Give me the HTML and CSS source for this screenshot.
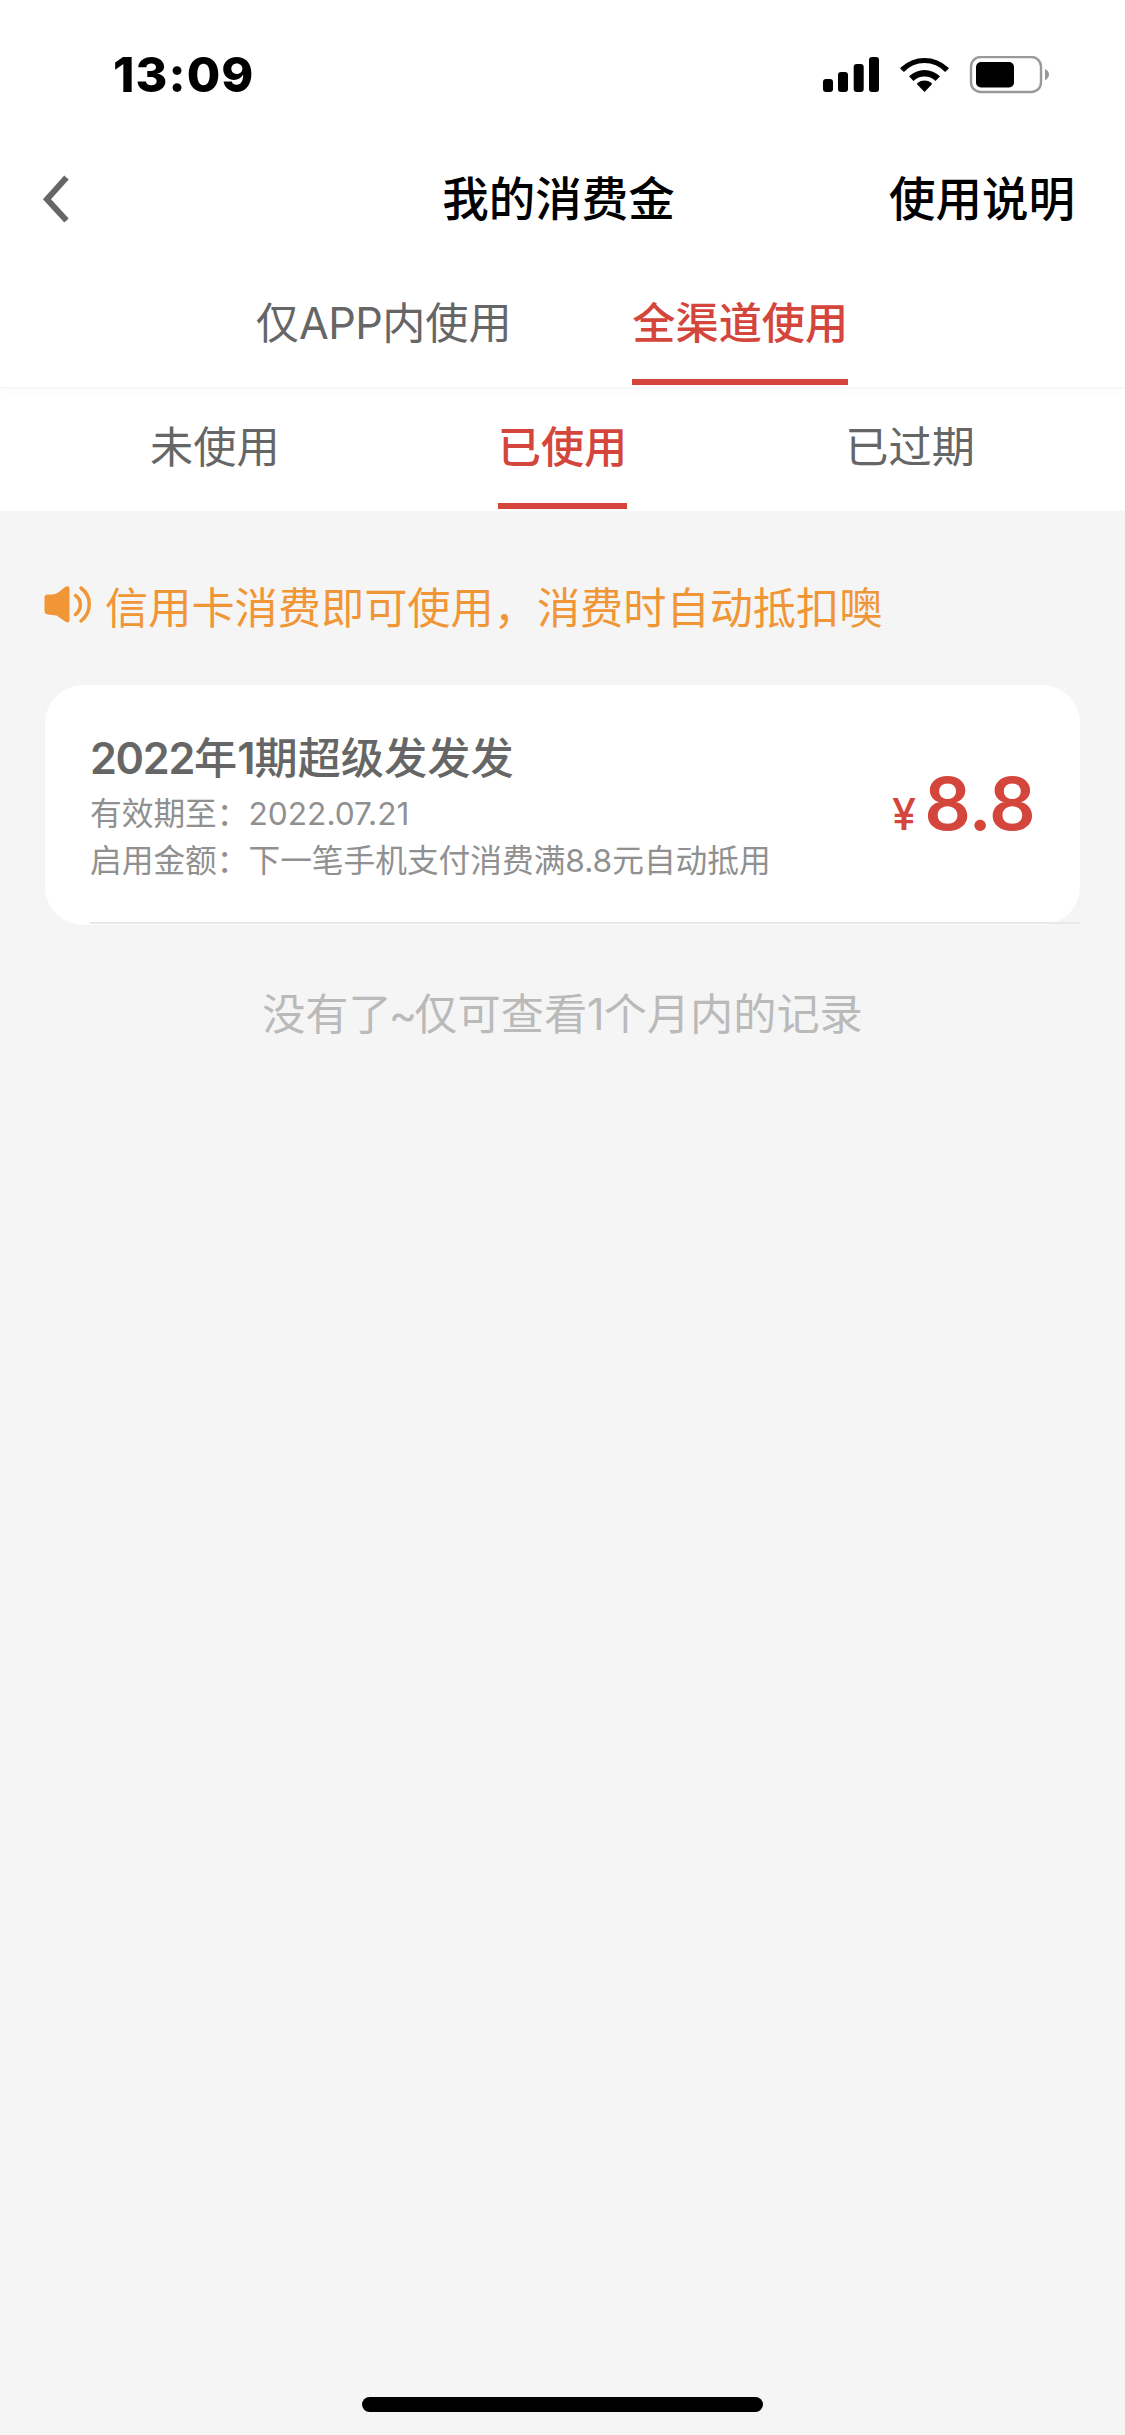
FILE: index.html
```html
<!DOCTYPE html>
<html lang="zh-CN">
<head>
<meta charset="utf-8">
<title>我的消费金</title>
<link rel="stylesheet" href="styles.css">
</head>
<body>
<div class="screen">
  <header class="top">
    <div class="status">
      <span class="clock">13:09</span>
      <svg class="status-icons" width="226" height="38" viewBox="823 56 226 38">
        <rect x="823" y="79" width="10" height="13" rx="3"/>
        <rect x="838" y="72" width="10" height="20" rx="3"/>
        <rect x="853.7" y="64" width="10" height="28" rx="3"/>
        <rect x="869" y="57" width="10" height="35" rx="3"/>
        <path d="M924.5 92l-7-7.3c-.6-.6-.5-1.400.2-1.900a11.200 11.200 0 0 1 13.600 0c.7.5.8 1.300.2 1.900z"/>
        <path d="M909 76.200a22.600 22.600 0 0 1 31 0l-4.500 4.700a16 16 0 0 0-22 0z"/>
        <path d="M900.700 67.500a34.500 34.500 0 0 1 47.600 0c.5.5.5 1 0 1.500l-3.200 3a28 28 0 0 0-41.200 0l-3.200-3c-.5-.5-.5-1 0-1.500z"/>
        <rect class="battery-shell" x="971" y="57" width="70" height="35" rx="9.500"/>
        <rect x="976" y="62" width="38" height="25.500" rx="5"/>
        <path class="battery-cap" d="M1045 69c5.300 2 5.300 9 0 11.300z"/>
      </svg>
    </div>
    <nav class="navbar">
      <svg class="back" width="28" height="48" viewBox="0 0 28 48"><path d="M24.500 2.500L5 24.200L24.500 45.500"/></svg>
      <h1 class="title">我的消费金</h1>
      <span class="help">使用说明</span>
    </nav>
    <div class="tabs channel-tabs">
      <span class="tab">仅<span class="latin">APP</span>内使用</span>
      <span class="tab active">全渠道使用</span>
    </div>
  </header>
  <div class="tabs state-tabs">
    <span class="tab">未使用</span>
    <span class="tab active">已使用</span>
    <span class="tab">已过期</span>
  </div>
  <main class="content">
    <div class="notice">
      <svg width="48" height="40" viewBox="0 0 48 40">
        <path class="speaker" d="M4 9.500h4c5 0 9-4.500 13-7.500Q25.500 0 25.500 3.500V35Q25.500 38.500 22 37L12.500 30.500L4 29.500Q.5 29 .5 26V12.500Q.5 9.500 4 9.500z"/>
        <path class="wave" d="M31.500 10.500C38 15 38 24 31.500 29.500M37 3C48 11 48 27 37 36"/>
      </svg>
      <span>信用卡消费即可使用，消费时自动抵扣噢</span>
    </div>
    <section class="card">
      <div class="details">
        <h2 class="card-title"><span class="num">2022</span>年<span class="one">1</span>期超级发发发</h2>
        <p>有效期至：<span class="date">2022.07.21</span></p>
        <p>启用金额：下一笔手机支付消费满<span class="date">8.8</span>元自动抵用</p>
      </div>
      <div class="price"><span class="yen">¥</span><span class="amount">8.8</span></div>
    </section>
    <p class="end">没有了<span class="tilde">~</span>仅可查看<span class="one">1</span>个月内的记录</p>
  </main>
  <div class="home-bar"></div>
</div>
</body>
</html>
```
FILE: styles.css
```css
* { box-sizing: border-box; }

body {
  margin: 0;
  background: #f5f5f5;
  font-family: Inter, "Noto Sans CJK SC", sans-serif;
  font-size: 43.2px;
  color: #666;
}

h1, h2, p { margin: 0; }

.screen {
  display: flex;
  flex-direction: column;
  width: 1125px;
  height: 2435px;
}

.top {
  position: relative;
  height: 388px;
  background: #fff;
  border-bottom: 1px solid #f4f4f4;
  box-shadow: 0 2px 8px rgba(0, 0, 0, 0.03);
}

.status {
  display: flex;
  justify-content: space-between;
  align-items: center;
  height: 149px;
  padding: 0 76px 0 113px;
}

.clock {
  font-size: 48.5px;
  font-weight: 800;
  letter-spacing: 1.1px;
  color: #000;
}

.battery-shell {
  fill: none;
  stroke: #999;
  stroke-width: 2.4;
}

.battery-cap { fill: #999; }

.navbar {
  display: grid;
  grid-template-columns: 1fr auto 1fr;
  align-items: center;
  height: 99px;
  padding: 0 50px 0 42px;
  font-size: 46.5px;
  font-weight: 500;
  color: #000;
}

.back {
  fill: none;
  stroke: #666;
  stroke-width: 6;
}

.title {
  padding: 0 0 7px;
  font-size: inherit;
  font-weight: inherit;
}

.help {
  justify-self: end;
  padding-bottom: 7px;
}

.tabs {
  display: grid;
  justify-items: center;
  background: #fff;
}

.channel-tabs {
  grid-template-columns: 1fr 1fr;
  height: 137px;
  padding: 0 206.5px 0 205.5px;
}

.state-tabs {
  grid-template-columns: repeat(3, 1fr);
  height: 123px;
  padding: 0 41px;
}

.tab {
  height: 121px;
  line-height: 119px;
  border-bottom: 6px solid transparent;
}

.channel-tabs .tab {
  height: 137px;
  line-height: 151px;
}

.tab.active {
  font-weight: 500;
  color: #d4453c;
  border-color: #d4453c;
}

.latin { letter-spacing: -0.6px; }

.content { padding: 60px 45px 0; }

.notice {
  display: flex;
  align-items: center;
  gap: 13px;
  height: 68px;
  color: #f19636;
}

.notice svg { margin-left: -1px; }

.notice span { padding-bottom: 1px; }

.speaker { fill: #f19636; }

.wave {
  fill: none;
  stroke: #f19636;
  stroke-width: 3.5;
  stroke-linecap: round;
}

.card {
  display: flex;
  justify-content: space-between;
  position: relative;
  height: 240px;
  margin-top: 46px;
  padding: 42px 45px 0 45px;
  border-radius: 38px;
  background: #fff;
}

.card::after {
  content: "";
  position: absolute;
  left: 45px;
  right: 0;
  bottom: 1px;
  height: 2px;
  background: #e9e9e9;
}

.card-title {
  font-size: 43.2px;
  font-weight: 500;
  line-height: 63px;
}

.details p {
  font-size: 31.7px;
  line-height: 47px;
  color: #909090;
}

.num {
  letter-spacing: -1.3px;
  font-weight: 600;
}

.one { letter-spacing: -1px; }

.card-title .one { font-weight: 600; }

.price {
  display: flex;
  align-items: baseline;
  gap: 8px;
  height: 100px;
  line-height: 154px;
  font-weight: 500;
  color: #d4453c;
}

.amount {
  font-size: 73px;
  font-weight: 600;
  letter-spacing: -0.8px;
}

.end {
  margin-top: 56px;
  line-height: 66px;
  text-align: center;
  color: #bababa;
}

.tilde {
  margin: 0 -3px;
}

.home-bar {
  width: 401px;
  height: 15px;
  margin: auto auto 23px;
  border-radius: 8px;
  background: #000;
}
```
